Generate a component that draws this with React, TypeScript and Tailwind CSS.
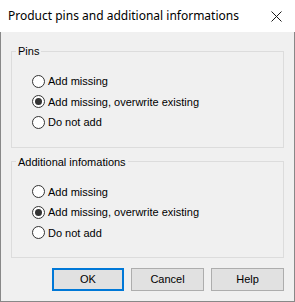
import React, { useState } from "react";

const font = { fontFamily: '"Liberation Sans", Arial, sans-serif' };

function Radio({ label, checked, onSelect }: { label: string; checked: boolean; onSelect: () => void }) {
	return (
		<label className="flex h-[20.5px] items-center gap-[3px] cursor-default" onClick={onSelect}>
			<span className="flex h-[13px] w-[13px] items-center justify-center rounded-full border border-[#333333] bg-white">
				{checked && <span className="h-[7px] w-[7px] rounded-full bg-[#333333]" />}
			</span>
			<span className="text-[11px] leading-[14px] text-black">{label}</span>
		</label>
	);
}

function Group({ title, className }: { title: string; className?: string }) {
	const [value, setValue] = useState(1);
	const options = ["Add missing", "Add missing, overwrite existing", "Do not add"];
	return (
		<fieldset className={"border border-[#dcdcdc] pt-[13px] pb-[14px] " + (className ?? "")}>
			<legend className="ml-[4px] px-[2px] text-[11px] leading-[14px] text-black">{title}</legend>
			<div className="flex flex-col pl-[20px]">
				{options.map((o, i) => (
					<Radio key={o} label={o} checked={value === i} onSelect={() => setValue(i)} />
				))}
			</div>
		</fieldset>
	);
}

export default function App() {
	return (
		<div className="flex h-[302px] w-[295px] flex-col" style={font}>
			{/* title bar */}
			<div className="flex h-[32px] items-center justify-between bg-white pl-[8px] pr-[13px]">
				<span className="text-[12px] text-black" style={{ fontFamily: '"Noto Sans", sans-serif' }}>
					Product pins and additional informations
				</span>
				<svg width="11" height="11" viewBox="0 0 11 11">
					<path d="M0.5 0.5 L10.5 10.5 M10.5 0.5 L0.5 10.5" stroke="#1a1a1a" strokeWidth="1" />
				</svg>
			</div>

			<div className="flex flex-1 flex-col border-x border-b border-[#888888] bg-[#f0f0f0] px-[10px] pt-[12px]">
				<Group title="Pins" />
				<Group title="Additional infomations" className="mt-[7px]" />

				<div className="mt-[10px] flex justify-end gap-[7px]">
					<button className="h-[23px] w-[72px] border-2 border-[#0078d7] bg-[#e1e1e1] text-[11px] text-black">OK</button>
					<button className="h-[23px] w-[73px] border border-[#adadad] bg-[#e1e1e1] text-[11px] text-black">Cancel</button>
					<button className="h-[23px] w-[73px] border border-[#adadad] bg-[#e1e1e1] text-[11px] text-black">Help</button>
				</div>
			</div>
		</div>
	);
}
